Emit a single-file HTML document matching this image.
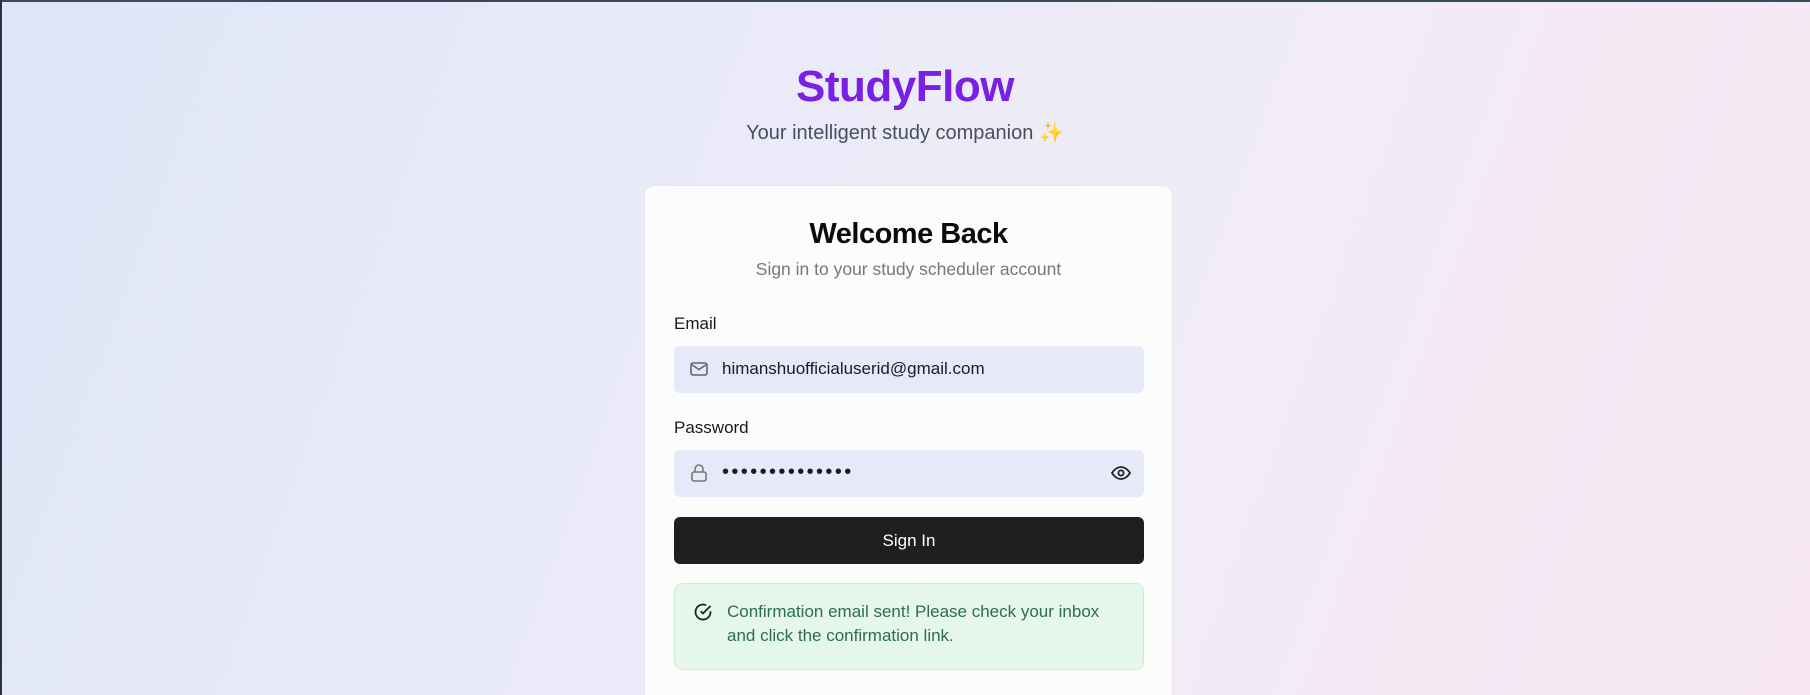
<!DOCTYPE html>
<html><head><meta charset="utf-8"><style>
html,body{margin:0;padding:0;width:1810px;height:695px;overflow:hidden;}
body{position:relative;font-family:"Liberation Sans",sans-serif;
background:linear-gradient(110deg,#dfe6f8 0%,#e9eaf8 35%,#f1ecf7 65%,#f7e7f1 100%);}
.topline{position:absolute;left:0;top:0;width:1810px;height:2px;background:#3a4a5a;}
.leftline{position:absolute;left:0;top:0;width:2px;height:695px;background:#2a3340;}
.title{position:absolute;left:0;width:1810px;text-align:center;top:62px;font-size:44px;font-weight:bold;color:#7a1fe6;letter-spacing:-0.5px;}
.sub{position:absolute;left:0;width:1810px;text-align:center;top:120px;font-size:20px;color:#4a4d5e;}
.card{position:absolute;left:644px;top:185px;width:527px;height:520px;background:#fcfcfd;border:1px solid #e8e6ee;border-radius:10px;}
.h{position:absolute;left:0;width:100%;text-align:center;top:32px;font-size:29px;font-weight:bold;color:#0b0b0b;letter-spacing:-0.5px;}
.hs{position:absolute;left:0;width:100%;text-align:center;top:73px;font-size:17.5px;color:#777;}
.lbl{position:absolute;left:29px;font-size:17px;color:#1a1a1a;}
.inp{position:absolute;left:29px;width:470px;height:47px;background:#e5e9f8;border-radius:6px;}
.inp .t{position:absolute;left:48px;top:13px;font-size:17px;color:#1a1a2a;}
.btn{position:absolute;left:29px;top:331px;width:470px;height:47px;background:#1f1f1f;border-radius:6px;color:#fff;text-align:center;line-height:47px;font-size:17px;}
.alert{position:absolute;left:29px;top:397px;width:468px;height:85px;background:#e5f6ea;border:1px solid #cbeed6;border-radius:8px;}
.alert .t{position:absolute;left:52px;top:16px;font-size:17px;line-height:24px;color:#2d6e4d;width:395px;}
</style></head><body>
<div class="topline"></div><div class="leftline"></div>
<div class="title">StudyFlow</div>
<div class="sub">Your intelligent study companion <span style="color:#f2b622">✨</span></div>
<div class="card">
<div class="h">Welcome Back</div>
<div class="hs">Sign in to your study scheduler account</div>
<div class="lbl" style="top:128px">Email</div>
<div class="inp" style="top:160px">
<svg style="position:absolute;left:16px;top:15px" width="18" height="16" viewBox="0 0 18 16" fill="none" stroke="#666" stroke-width="1.6"><rect x="1" y="2" width="16" height="12" rx="2"/><path d="M1.5 3.5l7.5 5 7.5-5"/></svg>
<div class="t">himanshuofficialuserid@gmail.com</div></div>
<div class="lbl" style="top:232px">Password</div>
<div class="inp" style="top:264px">
<svg style="position:absolute;left:16px;top:13px" width="18" height="20" viewBox="0 0 18 20" fill="none" stroke="#777" stroke-width="1.6"><rect x="2" y="9" width="14" height="9" rx="2"/><path d="M5 9V6a4 4 0 0 1 8 0v3"/></svg>
<div class="t" style="top:11px;font-size:20px;letter-spacing:2.4px">••••••••••••••</div>
<svg style="position:absolute;left:437px;top:16px" width="20" height="14" viewBox="0 0 20 14" fill="none" stroke="#222" stroke-width="1.8"><path d="M1 7s3.5-6 9-6 9 6 9 6-3.5 6-9 6-9-6-9-6z"/><circle cx="10" cy="7" r="2.6"/></svg>
</div>
<div class="btn">Sign In</div>
<div class="alert">
<svg style="position:absolute;left:18px;top:18px" width="20" height="20" viewBox="0 0 20 20" fill="none" stroke="#222" stroke-width="1.8"><path d="M17.5 9.3V10a7.5 7.5 0 1 1-4.4-6.8"/><path d="M17.5 4L10 11.5 7.7 9.2"/></svg>
<div class="t">Confirmation email sent! Please check your inbox and click the confirmation link.</div></div>
</div>
</body></html>
